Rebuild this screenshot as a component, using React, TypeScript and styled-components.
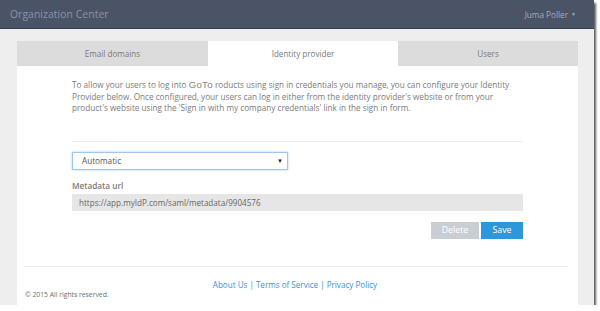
import React from "react";
import styled, { createGlobalStyle } from "styled-components";

const Global = createGlobalStyle`
  html, body { margin: 0; padding: 0; background: #ffffff; }
  body { font-family: "Open Sans", "Noto Sans", sans-serif; }
`;

const Frame = styled.div`
  width: 594px;
  height: 305px;
  display: flex;
  flex-direction: column;
  background: #eeeeee;
  box-shadow: 2px 3px 2px rgba(40, 40, 40, 0.75);
  overflow: hidden;
`;

const Header = styled.header`
  height: 28px;
  flex: none;
  background: #4b5366;
  border-bottom: 1px solid #363d4c;
  display: flex;
  align-items: center;
  justify-content: space-between;
  padding: 0 18px 0 10px;
`;

const Brand = styled.div`
  font-size: 10.3px;
  color: #8a93a6;
  letter-spacing: 0.1px;
`;

const UserMenu = styled.div`
  font-size: 8.2px;
  color: #a3abbb;
  display: flex;
  align-items: center;
  gap: 3px;
`;

const Caret = styled.span`
  font-size: 5px;
  line-height: 1;
`;

const Main = styled.main`
  flex: 1;
  display: flex;
  padding: 12px 16px 0 17px;
`;

const Card = styled.section`
  flex: 1;
  background: #ffffff;
  display: flex;
  flex-direction: column;
`;

const Tabs = styled.nav`
  display: grid;
  grid-template-columns: 191px 190px 1fr;
  height: 25px;
`;

const Tab = styled.div<{ $active?: boolean }>`
  display: flex;
  align-items: center;
  justify-content: center;
  font-size: 8.1px;
  color: #7a7a7a;
  background: ${(p) => (p.$active ? "#ffffff" : "#dcdcdc")};
`;

const Content = styled.div`
  padding: 13px 55px 0 55px;
  display: flex;
  flex-direction: column;
`;

const Intro = styled.p`
  margin: 0;
  font-size: 8.2px;
  line-height: 11.6px;
  color: #7b7b7b;
`;

const GoTo = styled.span`
  font-family: "Liberation Sans", sans-serif;
  font-size: 9.6px;
  line-height: 0;
  letter-spacing: 0.3px;
  color: #858585;
`;

const Divider = styled.hr`
  margin: 27px 0 10px 0;
  border: none;
  border-top: 1px solid #ececec;
`;

const SelectBox = styled.div`
  width: 216px;
  height: 18px;
  box-sizing: border-box;
  border: 1px solid #9dc8ec;
  box-shadow: 0 0 2px rgba(102, 170, 230, 0.6);
  display: flex;
  align-items: center;
  justify-content: space-between;
  padding: 0 4px 0 9px;
  font-size: 8.2px;
  color: #555555;
`;

const SelectArrow = styled.span`
  font-size: 6px;
  color: #222;
`;

const Label = styled.div`
  margin-top: 10px;
  font-size: 8.2px;
  font-weight: 600;
  color: #7a7a7a;
`;

const Field = styled.div`
  margin-top: 3px;
  height: 17px;
  background: #e6e6e6;
  display: flex;
  align-items: center;
  padding-left: 7px;
  font-size: 8.1px;
  color: #666666;
`;

const Actions = styled.div`
  margin-top: 11px;
  display: flex;
  justify-content: flex-end;
  gap: 2px;
`;

const Button = styled.button<{ $primary?: boolean }>`
  height: 17px;
  width: ${(p) => (p.$primary ? "42px" : "48px")};
  border: none;
  padding: 0;
  font-family: inherit;
  font-size: 8.8px;
  color: #ffffff;
  background: ${(p) => (p.$primary ? "#2b97dc" : "#c9ced4")};
`;

const Footer = styled.footer`
  margin: 27px 10px 0 7px;
  border-top: 1px solid #ececec;
  flex: 1;
`;

const Links = styled.div`
  padding-top: 12px;
  text-align: center;
  font-size: 8.1px;
  color: #3b92d8;
  padding-right: 2px;
`;

const Link = styled.a`
  color: inherit;
  text-decoration: none;
`;

const Sep = styled.span`
  color: #3b92d8;
  margin: 0 2px;
`;

const Copyright = styled.div`
  margin-top: 0px;
  padding-left: 1px;
  font-size: 6.8px;
  color: #6e6e6e;
`;

export default function App() {
  return (
    <>
      <Global />
      <Frame>
        <Header>
          <Brand>Organization Center</Brand>
          <UserMenu>
            Juma Poller <Caret>▼</Caret>
          </UserMenu>
        </Header>
        <Main>
          <Card>
            <Tabs>
              <Tab>Email domains</Tab>
              <Tab $active>Identity provider</Tab>
              <Tab>Users</Tab>
            </Tabs>
            <Content>
              <Intro>
                To allow your users to log into <GoTo>GoTo</GoTo> roducts using sign in credentials you manage, you can configure your Identity
                Provider below. Once configured, your users can log in either from the identity provider's website or from your
                product's website using the 'Sign in with my company credentials' link in the sign in form.
              </Intro>
              <Divider />
              <SelectBox>
                Automatic
                <SelectArrow>▼</SelectArrow>
              </SelectBox>
              <Label>Metadata url</Label>
              <Field>https://app.myIdP.com/saml/metadata/9904576</Field>
              <Actions>
                <Button>Delete</Button>
                <Button $primary>Save</Button>
              </Actions>
            </Content>
            <Footer>
              <Links>
                <Link>About Us</Link>
                <Sep>|</Sep>
                <Link>Terms of Service</Link>
                <Sep>|</Sep>
                <Link>Privacy Policy</Link>
              </Links>
              <Copyright>© 2015 All rights reserved.</Copyright>
            </Footer>
          </Card>
        </Main>
      </Frame>
    </>
  );
}
